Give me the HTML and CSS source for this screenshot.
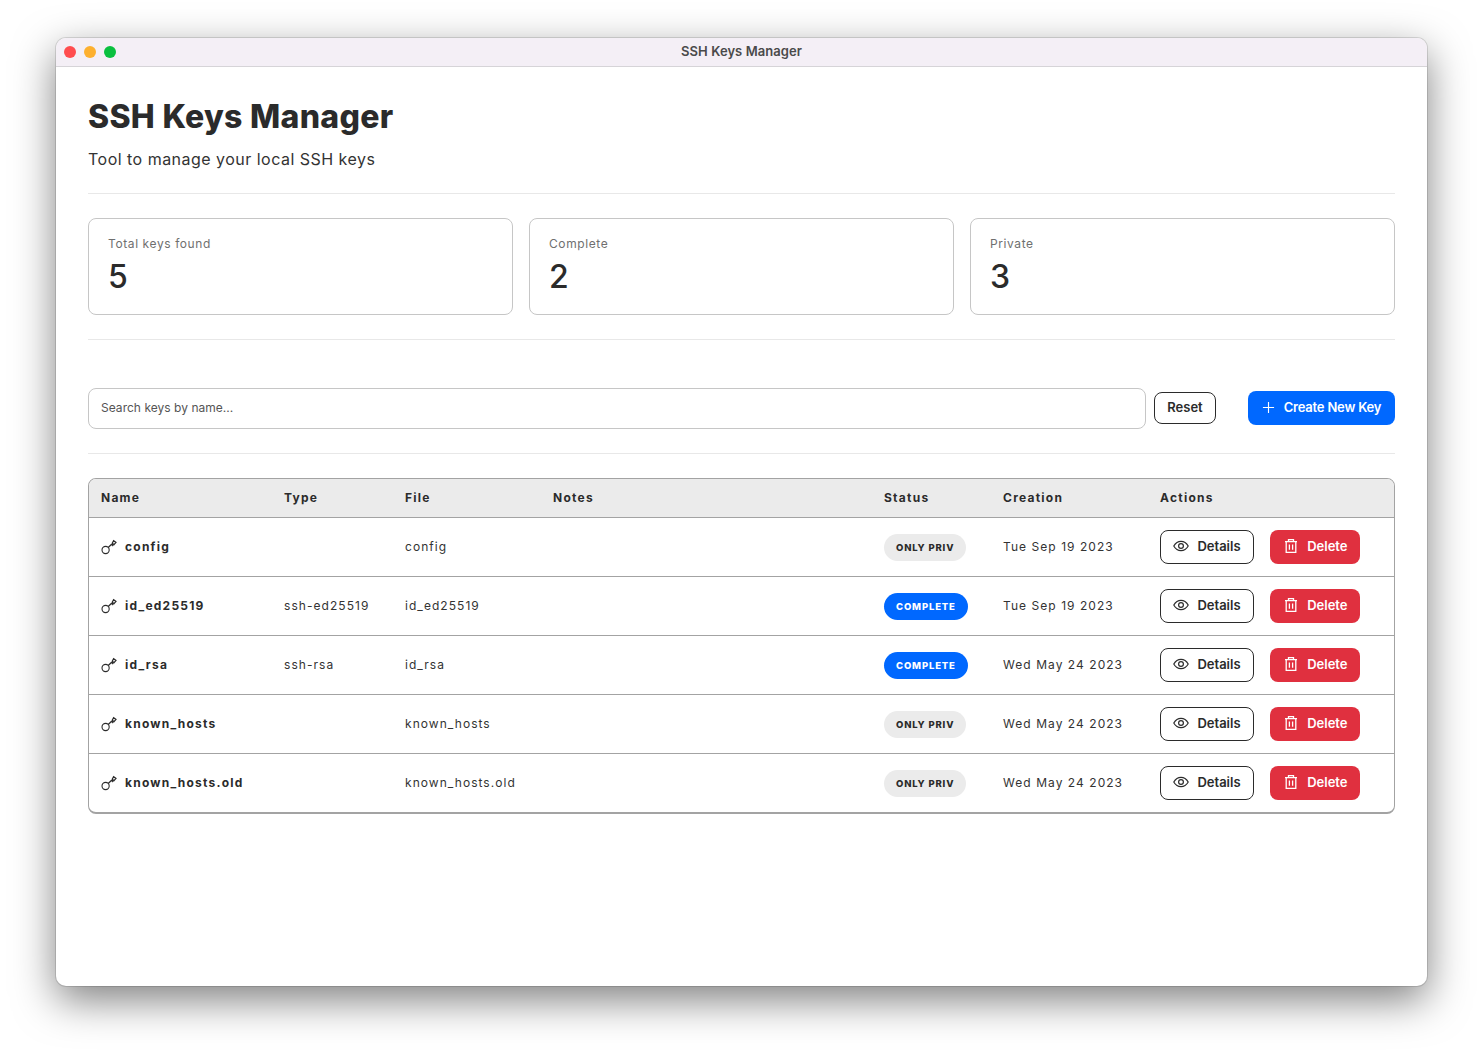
FILE: index.html
```html
<!DOCTYPE html>
<html lang="en">
<head>
    <meta charset="UTF-8">
    <title>SSH Keys Manager</title>
    <link rel="stylesheet" href="styles.css">
</head>
<body>
    <svg class="defs" width="0" height="0">
        <symbol id="i-key" viewBox="0 0 16 16">
            <circle cx="4.6" cy="11" r="3.6" fill="none" stroke="currentColor" stroke-width="1.1"/>
            <path d="M7.2 8.5 L10.6 5.2 M10.6 5.2 L12.2 7 M11.2 4.3 L12.6 1.6 L15 3.4 L13 5.6 Z" fill="none" stroke="currentColor" stroke-width="1.2"/>
        </symbol>
        <symbol id="i-eye" viewBox="0 0 16 16">
            <path d="M.8 8 C2.6 4.8 5 3.3 8 3.3 S13.4 4.8 15.2 8 C13.4 11.2 11 12.7 8 12.7 S2.6 11.2 .8 8 Z" fill="none" stroke="currentColor" stroke-width="1.2"/>
            <circle cx="8" cy="8" r="2.4" fill="none" stroke="currentColor" stroke-width="1.2"/>
        </symbol>
        <symbol id="i-trash" viewBox="0 0 16 16">
            <path d="M2 3.6 H14 M5.5 3.6 V1.6 H10.5 V3.6 M3.2 3.6 V14.4 H12.8 V3.6 M6.4 6.4 V11.8 M9.6 6.4 V11.8" fill="none" stroke="currentColor" stroke-width="1.3"/>
        </symbol>
    </svg>

    <div class="window">
        <div class="titlebar">
            <div class="lights">
                <span class="light red"></span>
                <span class="light yellow"></span>
                <span class="light green"></span>
            </div>
            <span class="title">SSH Keys Manager</span>
        </div>

        <div class="content">
            <h1>SSH Keys Manager</h1>
            <p class="subtitle">Tool to manage your local SSH keys</p>
            <hr class="sep-top">

            <div class="stats">
                <div class="stat">
                    <div class="stat-label">Total keys found</div>
                    <div class="stat-value">5</div>
                </div>
                <div class="stat">
                    <div class="stat-label">Complete</div>
                    <div class="stat-value">2</div>
                </div>
                <div class="stat">
                    <div class="stat-label">Private</div>
                    <div class="stat-value">3</div>
                </div>
            </div>
            <hr class="sep-stats">

            <div class="toolbar">
                <input class="search" type="text" placeholder="Search keys by name...">
                <button class="btn btn-outline btn-reset">Reset</button>
                <button class="btn btn-primary">
                    <svg class="plus" viewBox="0 0 14 14"><path d="M7 1 V13 M1 7 H13" fill="none" stroke="currentColor" stroke-width="1.2"/></svg>
                    Create New Key
                </button>
            </div>
            <hr class="sep-toolbar">

            <div class="table-wrap">
                <table>
                    <thead>
                        <tr>
                            <th class="col-name">Name</th>
                            <th class="col-type">Type</th>
                            <th class="col-file">File</th>
                            <th class="col-notes">Notes</th>
                            <th class="col-status">Status</th>
                            <th class="col-creation">Creation</th>
                            <th class="col-actions">Actions</th>
                        </tr>
                    </thead>
                    <tbody>
                        <tr>
                            <td class="name"><svg class="key"><use href="#i-key"/></svg>config</td>
                            <td></td>
                            <td>config</td>
                            <td></td>
                            <td><span class="badge badge-grey">ONLY PRIV</span></td>
                            <td>Tue Sep 19 2023</td>
                            <td class="actions">
                                <button class="btn btn-outline btn-details"><svg><use href="#i-eye"/></svg>Details</button>
                                <button class="btn btn-danger"><svg><use href="#i-trash"/></svg>Delete</button>
                            </td>
                        </tr>
                        <tr>
                            <td class="name"><svg class="key"><use href="#i-key"/></svg>id_ed25519</td>
                            <td>ssh-ed25519</td>
                            <td>id_ed25519</td>
                            <td></td>
                            <td><span class="badge badge-blue">COMPLETE</span></td>
                            <td>Tue Sep 19 2023</td>
                            <td class="actions">
                                <button class="btn btn-outline btn-details"><svg><use href="#i-eye"/></svg>Details</button>
                                <button class="btn btn-danger"><svg><use href="#i-trash"/></svg>Delete</button>
                            </td>
                        </tr>
                        <tr>
                            <td class="name"><svg class="key"><use href="#i-key"/></svg>id_rsa</td>
                            <td>ssh-rsa</td>
                            <td>id_rsa</td>
                            <td></td>
                            <td><span class="badge badge-blue">COMPLETE</span></td>
                            <td>Wed May 24 2023</td>
                            <td class="actions">
                                <button class="btn btn-outline btn-details"><svg><use href="#i-eye"/></svg>Details</button>
                                <button class="btn btn-danger"><svg><use href="#i-trash"/></svg>Delete</button>
                            </td>
                        </tr>
                        <tr>
                            <td class="name"><svg class="key"><use href="#i-key"/></svg>known_hosts</td>
                            <td></td>
                            <td>known_hosts</td>
                            <td></td>
                            <td><span class="badge badge-grey">ONLY PRIV</span></td>
                            <td>Wed May 24 2023</td>
                            <td class="actions">
                                <button class="btn btn-outline btn-details"><svg><use href="#i-eye"/></svg>Details</button>
                                <button class="btn btn-danger"><svg><use href="#i-trash"/></svg>Delete</button>
                            </td>
                        </tr>
                        <tr>
                            <td class="name"><svg class="key"><use href="#i-key"/></svg>known_hosts.old</td>
                            <td></td>
                            <td>known_hosts.old</td>
                            <td></td>
                            <td><span class="badge badge-grey">ONLY PRIV</span></td>
                            <td>Wed May 24 2023</td>
                            <td class="actions">
                                <button class="btn btn-outline btn-details"><svg><use href="#i-eye"/></svg>Details</button>
                                <button class="btn btn-danger"><svg><use href="#i-trash"/></svg>Delete</button>
                            </td>
                        </tr>
                    </tbody>
                </table>
            </div>
        </div>
    </div>
</body>
</html>
```

FILE: styles.css
```css
* {
    box-sizing: border-box;
}
html, body {
    height: 100%;
}
body {
    margin: 0;
    padding: 38px 56px 74px;
    background-color: #fff;
    color: #2b2b2b;
    font-family: Inter, "Liberation Sans", sans-serif;
    overflow: hidden;
}
.defs {
    position: absolute;
}
.window {
    width: 1371px;
    height: 948px;
    background: #fff;
    border-radius: 10px;
    overflow: hidden;
    box-shadow: 0 0 0 1px rgba(0, 0, 0, 0.12), 0 14px 42px rgba(0, 0, 0, 0.5);
}
.titlebar {
    position: relative;
    height: 29px;
    padding-bottom: 2px;
    display: flex;
    align-items: center;
    justify-content: center;
    background-color: #f4eff6;
    border-bottom: 1px solid #d6d4d8;
}
.lights {
    position: absolute;
    left: 8px;
    top: 8px;
    display: flex;
    gap: 8px;
}
.light {
    width: 12px;
    height: 12px;
    border-radius: 50%;
}
.red { background-color: #ff4d4f; }
.yellow { background-color: #fdb02f; }
.green { background-color: #0ac03f; }
.title {
    font-size: 13px;
    font-weight: 600;
    letter-spacing: 0.06px;
    color: #4a4a4a;
}
.content {
    padding: 32px 32px 0;
}
h1 {
    margin: 0;
    font-size: 32px;
    line-height: 36px;
    font-weight: 800;
    letter-spacing: 0.3px;
    color: #2b2b2b;
}
.subtitle {
    margin: 12px 0 0;
    font-size: 16px;
    line-height: 24px;
    letter-spacing: 0.48px;
    color: #333;
}
hr {
    margin: 0;
    border: none;
    border-top: 1px solid #e8e8e8;
}
.sep-top { margin: 22px 0 24px; }
.sep-stats { margin: 24px 0 48px; }
.sep-toolbar { margin: 24px 0; }
.stats {
    display: grid;
    grid-template-columns: repeat(3, 1fr);
    gap: 16px;
}
.stat {
    height: 97px;
    padding: 17px 19px;
    border: 1px solid #c6c6c6;
    border-radius: 8px;
}
.stat-label {
    font-size: 12px;
    line-height: 16px;
    letter-spacing: 0.6px;
    color: #6f6f6f;
}
.stat-value {
    margin-top: 7px;
    font-size: 32px;
    line-height: 36px;
    font-weight: 500;
}
.toolbar {
    display: flex;
    align-items: center;
}
.search {
    flex: 1;
    height: 41px;
    padding: 0 12px 2px;
    border: 1px solid #c6c6c6;
    border-radius: 8px;
    font-family: inherit;
    font-size: 12px;
    letter-spacing: 0.03px;
    outline: none;
}
.search::placeholder {
    color: #555;
    opacity: 1;
}
.btn {
    display: inline-flex;
    align-items: center;
    justify-content: center;
    height: 34px;
    padding: 0 0 1px;
    border-radius: 8px;
    font-family: inherit;
    font-size: 13px;
    font-weight: 600;
    cursor: pointer;
}
.btn svg {
    width: 16px;
    height: 16px;
}
.btn-outline {
    background-color: #fff;
    color: #2b2b2b;
    border: 1px solid #2b2b2b;
}
.btn-reset {
    width: 62px;
    height: 32px;
    margin: 0 32px 2px 8px;
}
.btn-primary {
    width: 147px;
    margin-bottom: 2px;
    background-color: #0068ff;
    color: #fff;
    border: none;
    white-space: nowrap;
    letter-spacing: -0.2px;
}
.btn .plus {
    width: 13px;
    height: 13px;
    margin-right: 9px;
}
.btn-details {
    width: 94px;
}
.btn-details svg {
    margin-right: 8px;
}
.btn-danger {
    width: 90px;
    margin-left: 13px;
    background-color: #e0303f;
    color: #fff;
    border: none;
}
.btn-danger svg {
    margin-right: 8px;
}
.table-wrap {
    border: 1px solid #a3a3a3;
    border-bottom-width: 2px;
    border-radius: 8px;
    overflow: hidden;
}
table {
    width: 100%;
    table-layout: fixed;
    border-collapse: collapse;
    font-size: 12px;
    letter-spacing: 1.05px;
}
th {
    height: 38px;
    padding: 0 12px;
    text-align: left;
    font-weight: 700;
    font-size: 12px;
    letter-spacing: 1.25px;
    background-color: #ebebeb;
    border-bottom: 1px solid #a3a3a3;
}
.col-name { width: 183px; }
.col-type { width: 121px; }
.col-file { width: 148px; }
.col-notes { width: 331px; }
.col-status { width: 119px; }
.col-creation { width: 157px; }
td {
    height: 59px;
    padding: 0 12px;
    border-bottom: 1px solid #a3a3a3;
    color: #333;
}
tbody tr:last-child td {
    border-bottom: none;
}
.name {
    font-weight: 700;
    letter-spacing: 1.23px;
    color: #2b2b2b;
}
.key {
    width: 16px;
    height: 16px;
    margin-right: 8px;
    vertical-align: -4px;
}
.badge {
    display: inline-block;
    height: 27px;
    line-height: 27px;
    margin-top: 2px;
    vertical-align: middle;
    padding: 0 12px;
    border-radius: 14px;
    font-size: 9.5px;
    font-weight: 800;
    letter-spacing: 0.85px;
}
.badge-grey {
    background-color: #ebebeb;
    color: #2b2b2b;
}
.badge-blue {
    background-color: #0068ff;
    color: #fff;
}
.actions {
    white-space: nowrap;
    letter-spacing: 0;
}
```
